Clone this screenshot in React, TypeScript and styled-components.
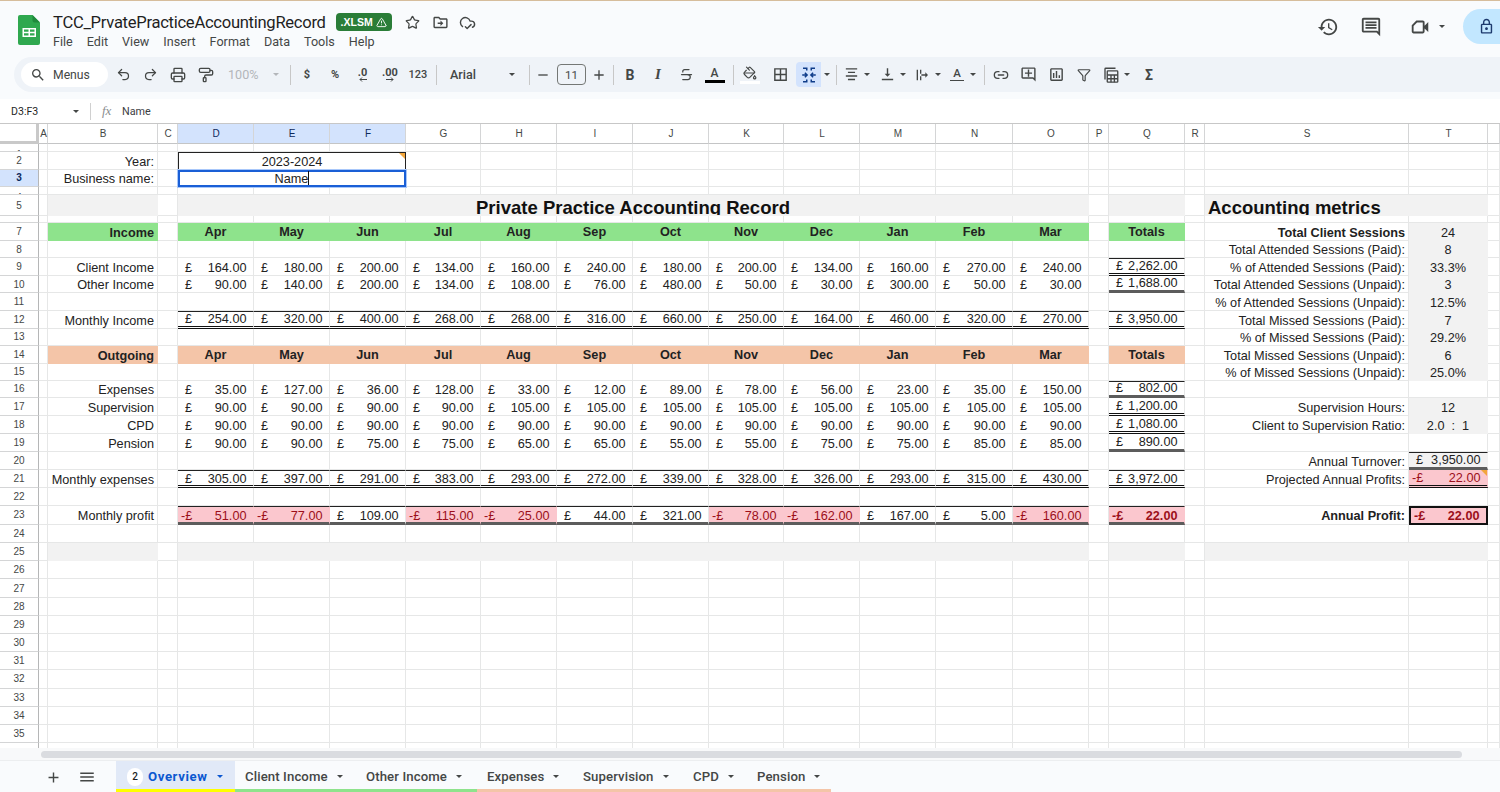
import React from "react";
import styled, { createGlobalStyle } from "styled-components";
import { Undo2, Redo2, Printer, PaintRoller, Star, CloudCheck, Strikethrough, Link2, Funnel, PaintBucket, TriangleAlert } from "lucide-react";

const GRID_FONT = `"Liberation Sans", Arial, sans-serif`;
const UI_FONT = `Roboto, "Open Sans", Arial, sans-serif`;

const COLS = ["A", "B", "C", "D", "E", "F", "G", "H", "I", "J", "K", "L", "M", "N", "O", "P", "Q", "R", "S", "T", "U"];
const COL_W = [9, 110, 20, 76, 76, 76, 75, 76, 76, 76, 75, 76, 76, 77, 76, 20, 76, 20, 204, 79, 12];
const ROW_H = [8.3, 17.4, 17.6, 8, 20.7, 7.3, 18, 17, 17.7, 17.3, 17.7, 17.7, 17, 18, 17, 17.7, 17.7, 18.3, 18, 17.7, 18.3, 17.7, 19, 17.7, 18.6, 18.2, 18.2, 18.2, 18.2, 18.2, 18.2, 18.2, 18.2, 18.2, 18.2, 8];
const TINY_ROWS = [1, 4, 6];
const LOW_MONEY_ROWS = [21, 23];
const MONTH_COLS = ["D", "E", "F", "G", "H", "I", "J", "K", "L", "M", "N", "O"];
const MONTHS = ["Apr", "May", "Jun", "Jul", "Aug", "Sep", "Oct", "Nov", "Dec", "Jan", "Feb", "Mar"];

const GREEN = "#8ee38c";
const ORANGE = "#f4c5a8";
const GRAY = "#f2f2f2";
const PINK = "#fbc7ce";

type Edge = "thin" | "double" | "thick" | "box";
type Spec = {
  text?: string;
  money?: number;
  span?: number;
  bg?: string;
  bold?: boolean;
  align?: "left" | "right" | "center";
  top?: Edge;
  bottom?: Edge;
  heading?: boolean;
  box?: boolean;
  note?: boolean;
  year?: boolean;
  selected?: boolean;
  lift?: boolean;
  skip?: boolean;
};

const fmt = (n: number) =>
  Math.abs(n).toLocaleString("en-GB", { minimumFractionDigits: 2, maximumFractionDigits: 2 });

const buildCells = () => {
  const c: Record<string, Spec> = {};
  const merge = (col: string, row: number, span: number, spec: Spec) => {
    const start = COLS.indexOf(col);
    c[col + row] = { ...spec, span };
    for (let i = 1; i < span; i++) c[COLS[start + i] + row] = { skip: true };
  };
  const label = (row: number, text: string, bold = false) => {
    c["B" + row] = { text, align: "right", bold, lift: row === 23 };
  };
  const metric = (row: number, text: string, bold = false) => {
    c["S" + row] = { text, align: "right", bold, lift: row === 23 };
  };
  const moneyRow = (row: number, values: number[], total: number, top?: Edge, bottom?: Edge, qTop?: Edge, qBottom?: Edge) => {
    MONTH_COLS.forEach((col, i) => {
      c[col + row] = { money: values[i], top, bottom, bg: row === 23 && values[i] < 0 ? PINK : undefined };
    });
    c["Q" + row] = { money: total, top: qTop, bottom: qBottom, bg: total < 0 ? PINK : undefined, bold: total < 0 };
  };
  const bandRow = (row: number, title: string, bg: string) => {
    c["B" + row] = { text: title, align: "right", bold: true, bg };
    MONTH_COLS.forEach((col, i) => {
      c[col + row] = { text: MONTHS[i], align: "center", bold: true, bg, lift: true };
    });
    c["Q" + row] = { text: "Totals", align: "center", bold: true, bg, lift: true };
  };

  label(2, "Year:");
  label(3, "Business name:");
  merge("D", 2, 3, { text: "2023-2024", align: "center", year: true, note: true });
  merge("D", 3, 3, { text: "Name", align: "center", selected: true });

  c.B5 = { bg: GRAY };
  merge("D", 5, 12, { text: "Private Practice Accounting Record", align: "center", heading: true, bg: GRAY });
  c.Q5 = { bg: GRAY };
  merge("S", 5, 2, { text: "Accounting metrics", align: "left", heading: true, bg: GRAY });

  bandRow(7, "Income", GREEN);
  bandRow(14, "Outgoing", ORANGE);

  label(9, "Client Income");
  label(10, "Other Income");
  label(12, "Monthly Income");
  label(16, "Expenses");
  label(17, "Supervision");
  label(18, "CPD");
  label(19, "Pension");
  label(21, "Monthly expenses");
  label(23, "Monthly profit");

  moneyRow(9, [164, 180, 200, 134, 160, 240, 180, 200, 134, 160, 270, 240], 2262, undefined, undefined, "thin", "double");
  moneyRow(10, [90, 140, 200, 134, 108, 76, 480, 50, 30, 300, 50, 30], 1688, undefined, undefined, undefined, "thick");
  moneyRow(12, [254, 320, 400, 268, 268, 316, 660, 250, 164, 460, 320, 270], 3950, "thin", "double", "thin", "double");
  moneyRow(16, [35, 127, 36, 128, 33, 12, 89, 78, 56, 23, 35, 150], 802, undefined, undefined, "thin", "thick");
  moneyRow(17, [90, 90, 90, 90, 105, 105, 105, 105, 105, 105, 105, 105], 1200, undefined, undefined, undefined, "double");
  moneyRow(18, [90, 90, 90, 90, 90, 90, 90, 90, 90, 90, 90, 90], 1080, undefined, undefined, undefined, "double");
  moneyRow(19, [90, 90, 75, 75, 65, 65, 55, 55, 75, 75, 85, 85], 890, undefined, undefined, undefined, "thick");
  moneyRow(21, [305, 397, 291, 383, 293, 272, 339, 328, 326, 293, 315, 430], 3972, "thin", "double", "thin", "double");
  moneyRow(23, [-51, -77, 109, -115, -25, 44, 321, -78, -162, 167, 5, -160], -22, "thin", "thick", "thin", "thick");

  metric(7, "Total Client Sessions", true);
  metric(8, "Total Attended Sessions (Paid):");
  metric(9, "% of Attended Sessions (Paid):");
  metric(10, "Total Attended Sessions (Unpaid):");
  metric(11, "% of Attended Sessions (Unpaid):");
  metric(12, "Total Missed Sessions (Paid):");
  metric(13, "% of Missed Sessions (Paid):");
  metric(14, "Total Missed Sessions (Unpaid):");
  metric(15, "% of Missed Sessions (Unpaid):");
  metric(17, "Supervision Hours:");
  metric(18, "Client to Supervision Ratio:");
  metric(20, "Annual Turnover:");
  metric(21, "Projected Annual Profits:");
  metric(23, "Annual Profit:", true);

  const stats: [number, string][] = [
    [7, "24"], [8, "8"], [9, "33.3%"], [10, "3"], [11, "12.5%"], [12, "7"], [13, "29.2%"], [14, "6"], [15, "25.0%"],
    [17, "12"], [18, "2.0  :  1"],
  ];
  stats.forEach(([row, text]) => {
    c["T" + row] = { text, align: "center", bg: GRAY };
  });
  c.T20 = { money: 3950, bg: GRAY, top: "thin", bottom: "thick" };
  c.T21 = { money: -22, bg: PINK, bottom: "double", note: true };
  c.T23 = { money: -22, bg: PINK, bold: true, box: true };

  c.B25 = { bg: GRAY };
  merge("D", 25, 12, { bg: GRAY });
  c.Q25 = { bg: GRAY };
  merge("S", 25, 2, { bg: GRAY });
  return c;
};

const CELLS = buildCells();

const edgeCss = (side: string, e?: Edge) => {
  if (e === "thin") return `border-${side}: 1px solid #222;`;
  if (e === "double") return `border-${side}: 3px double #111;`;
  if (e === "thick") return `border-${side}: 3px solid #5c5c5c;`;
  return "";
};

const GlobalStyle = createGlobalStyle`
  html, body { margin: 0; padding: 0; background: #fff; overflow: hidden; }
  #root { width: 1500px; height: 792px; }
  * { box-sizing: border-box; }
`;

const Page = styled.div`
  width: 1500px;
  height: 792px;
  display: flex;
  flex-direction: column;
  overflow: hidden;
  background: #f9fbfd;
  font-family: ${UI_FONT};
  color: #444746;
  border-top: 1px solid #d6bd9c;
`;

const Header = styled.header`
  height: 56px;
  flex: none;
  display: flex;
  align-items: flex-start;
  padding: 0 0 0 18px;
`;

const Logo = styled.svg`
  width: 22px;
  height: 30px;
  margin: 14px 13px 0 0;
  flex: none;
`;

const TitleBlock = styled.div`
  display: flex;
  flex-direction: column;
  padding-top: 11px;
`;

const TitleRow = styled.div`
  display: flex;
  align-items: center;
  height: 20px;
`;

const DocName = styled.span`
  font-size: 16.6px;
  color: #1f1f1f;
  letter-spacing: -0.29px;
`;

const Badge = styled.span`
  margin-left: 10px;
  width: 56px;
  height: 18px;
  border-radius: 4px;
  background: #2a7d38;
  color: #fff;
  font: 700 10.5px ${GRID_FONT};
  display: flex;
  align-items: center;
  justify-content: center;
  gap: 3px;
`;

const TitleIcon = styled.span<{ $ml: number }>`
  margin-left: ${(p) => p.$ml}px;
  width: 18px;
  height: 18px;
  display: flex;
  align-items: center;
  justify-content: center;
  color: #444746;
`;

const MenuBar = styled.nav`
  display: flex;
  gap: 14px;
  height: 18px;
  align-items: center;
`;

const MenuItem = styled.span`
  font-size: 12.6px;
  color: #444746;
`;

const RightIcons = styled.div`
  margin-left: auto;
  display: flex;
  align-items: center;
  height: 35px;
  margin-top: 8px;
`;

const HeadIcon = styled.span<{ $w: number }>`
  width: ${(p) => p.$w}px;
  display: flex;
  align-items: center;
  justify-content: center;
  color: #444746;
`;

const VideoIcon = styled(HeadIcon)`
  justify-content: flex-end;
  gap: 8px;
`;

const ShareButton = styled.div`
  width: 37px;
  height: 35px;
  margin-left: 18px;
  background: #c2e7ff;
  border-radius: 18px 0 0 18px;
  display: flex;
  align-items: center;
  justify-content: flex-end;
  padding-right: 5px;
  color: #1d3a6e;
`;

const Toolbar = styled.div`
  height: 35px;
  flex: none;
  margin-left: 14px;
  background: #eff3f8;
  border-radius: 18px 0 0 18px;
  display: flex;
  align-items: center;
  padding-left: 7px;
`;

const MenuSearch = styled.div`
  width: 87px;
  height: 25px;
  background: #fff;
  border-radius: 13px;
  display: flex;
  align-items: center;
  gap: 7px;
  padding-left: 9px;
  font-size: 12.2px;
  color: #444746;
  margin-right: 1px;
`;

const Tool = styled.span<{ $w: number; $ml?: number; $on?: boolean; $muted?: boolean }>`
  width: ${(p) => p.$w}px;
  height: 25px;
  margin-left: ${(p) => p.$ml ?? 0}px;
  flex: none;
  display: flex;
  align-items: center;
  justify-content: center;
  color: ${(p) => (p.$muted ? "#b3b6ba" : "#444746")};
  background: ${(p) => (p.$on ? "#d3e3fd" : "transparent")};
  border-radius: ${(p) => (p.$on ? "4px 0 0 4px" : "0")};
  font-size: 11px;
`;

const Sep = styled.span<{ $ml: number; $mr: number }>`
  width: 1px;
  height: 20px;
  flex: none;
  background: #c7c7c7;
  margin: 0 ${(p) => p.$mr}px 0 ${(p) => p.$ml}px;
`;

const Caret = styled.span`
  width: 0;
  height: 0;
  flex: none;
  border-left: 3.5px solid transparent;
  border-right: 3.5px solid transparent;
  border-top: 3.5px solid currentColor;
`;

const ToolNum = styled.span<{ $bold?: boolean }>`
  font: ${(p) => (p.$bold ? 700 : 500)} 11px ${UI_FONT};
  display: inline-flex;
  flex-direction: column;
  align-items: center;
  line-height: 9px;
`;

const MiniArrow = styled.svg`
  width: 9px;
  height: 5px;
  display: block;
`;

const ZoomTool = styled(Tool)`
  justify-content: flex-start;
  padding-left: 8px;
  gap: 15px;
  font-size: 12.6px;
`;

const FontTool = styled(Tool)`
  justify-content: space-between;
  padding: 0 9px 0 10px;
  font-size: 12.6px;
  font-weight: 500;
`;

const SizeBox = styled.span`
  width: 29px;
  height: 21px;
  margin-left: 4px;
  margin-right: 3px;
  flex: none;
  border: 1px solid #747775;
  border-radius: 4px;
  display: flex;
  align-items: center;
  justify-content: center;
  font-size: 11.5px;
  color: #444746;
`;

const LetterGlyph = styled.span<{ $italic?: boolean }>`
  font: ${(p) => (p.$italic ? "italic 700 15px" : "700 14px")} ${(p) => (p.$italic ? `"Liberation Serif", serif` : UI_FONT)};
  color: #444746;
`;

const ColorA = styled.span<{ $bar: string }>`
  display: flex;
  flex-direction: column;
  align-items: center;
  font: 500 12px/12px ${UI_FONT};
  color: #444746;
  &::after {
    content: "";
    display: block;
    width: 20px;
    height: 3px;
    margin-top: 1px;
    background: ${(p) => p.$bar};
  }
`;

const FillStack = styled.span`
  display: flex;
  flex-direction: column;
  align-items: center;
  gap: 1px;
  &::after {
    content: "";
    display: block;
    width: 20px;
    height: 3px;
    background: #fff;
  }
`;

const RotateGlyph = styled.span`
  display: flex;
  flex-direction: column;
  align-items: center;
  font: 500 11.5px/10px ${UI_FONT};
  color: #444746;
  &::after {
    content: "";
    display: block;
    width: 14px;
    height: 1.5px;
    margin-top: 2px;
    background: #444746;
  }
`;

const FormulaBar = styled.div`
  height: 25px;
  margin-top: 7px;
  flex: none;
  background: #fff;
  border-bottom: 1px solid #c7c7c7;
  display: flex;
  align-items: center;
  padding-left: 11px;
  font-size: 11px;
  color: #3c4043;
`;

const NameBox = styled.span`
  width: 62px;
  font-size: 10.6px;
  color: #1f1f1f;
`;

const NameCaret = styled.span`
  color: #444746;
  display: flex;
`;

const FormulaSep = styled.span`
  width: 1px;
  height: 17px;
  background: #d0d0d0;
  margin: 0 11px 0 11px;
`;

const Fx = styled.span`
  font: italic 13px "Liberation Serif", serif;
  color: #8a8d90;
  width: 20px;
`;

const FormulaText = styled.span`
  font-size: 10.8px;
  color: #3c4043;
`;

const Sheet = styled.div`
  flex: none;
  height: 624px;
  background: #fff;
  overflow: hidden;
  display: grid;
  grid-template-columns: 39px ${COL_W.map((w) => w + "px").join(" ")};
  grid-template-rows: 20px ${ROW_H.map((h) => h + "px").join(" ")};
  font-family: ${GRID_FONT};
`;

const Corner = styled.div`
  background: #fff;
  border-right: 3px solid #c9c9c9;
  border-bottom: 3px solid #c9c9c9;
`;

const ColHead = styled.div<{ $on: boolean }>`
  background: ${(p) => (p.$on ? "#d3e3fd" : "#fff")};
  border-right: 1px solid #d4d5d6;
  border-bottom: 1px solid #c4c5c6;
  color: ${(p) => (p.$on ? "#0d2a5c" : "#444746")};
  font-size: 10px;
  padding-left: 1px;
  display: flex;
  align-items: center;
  justify-content: center;
`;

const RowHead = styled.div<{ $on: boolean; $tiny: boolean }>`
  background: ${(p) => (p.$on ? "#d3e3fd" : "#fff")};
  border-right: 1px solid #b5b6b7;
  border-bottom: 1px solid #d4d5d6;
  color: ${(p) => (p.$on ? "#0d2a5c" : "#444746")};
  font-size: 10px;
  line-height: 11px;
  font-weight: ${(p) => (p.$on ? 700 : 400)};
  overflow: hidden;
  display: flex;
  justify-content: center;
  align-items: ${(p) => (p.$tiny ? "flex-start" : "center")};
  padding-top: ${(p) => (p.$tiny ? "5px" : "0")};
`;

const Cell = styled.div<{
  $span: number;
  $bg?: string;
  $bold?: boolean;
  $align?: string;
  $top?: Edge;
  $bottom?: Edge;
  $danger?: boolean;
  $lift?: boolean;
}>`
  grid-column: span ${(p) => p.$span};
  position: relative;
  min-width: 0;
  overflow: hidden;
  display: flex;
  align-items: flex-end;
  justify-content: ${(p) => (p.$align === "right" ? "flex-end" : p.$align === "center" ? "center" : "flex-start")};
  padding: 0 3px ${(p) => (p.$lift ? 1 : 0)}px;
  background: ${(p) => p.$bg ?? "#fff"};
  border-right: 1px solid ${(p) => p.$bg ?? "#e6e7e7"};
  border-bottom: 1px solid ${(p) => p.$bg ?? "#e6e7e7"};
  ${(p) => edgeCss("top", p.$top)}
  ${(p) => edgeCss("bottom", p.$bottom)}
  font-size: 12.7px;
  line-height: 14px;
  white-space: pre;
  font-weight: ${(p) => (p.$bold ? 700 : 400)};
  color: ${(p) => (p.$danger ? "#9c0f1a" : "#222")};
`;

const HeadingCell = styled(Cell)`
  align-items: flex-start;
  padding-top: 3px;
  font-size: 18.5px;
  line-height: 20px;
  color: #111;
`;

const YearCell = styled(Cell)`
  border-top: 1px solid #222;
  border-left: 1px solid #222;
  border-right: 1px solid #222;
  overflow: visible;
`;

const SelectedCell = styled(Cell)`
  border: 2px solid #1a5fd6;
  box-shadow: 0 0 0 1px #a8c7fa;
  z-index: 2;
  overflow: visible;
  align-items: center;
`;

const BoxCell = styled(Cell)`
  border: 2px solid #111;
  z-index: 1;
  overflow: visible;
`;

const EditCursor = styled.span`
  display: inline-block;
  width: 1px;
  height: 14px;
  background: #111;
  vertical-align: -2px;
`;

const Note = styled.span`
  position: absolute;
  top: 0;
  right: 0;
  width: 0;
  height: 0;
  border-top: 6px solid #f2a63c;
  border-left: 6px solid transparent;
`;

const Money = styled.span<{ $neg: boolean; $low: boolean }>`
  flex: 1;
  display: flex;
  justify-content: space-between;
  padding: 0 3.5px 0 ${(p) => (p.$neg ? 0 : 4)}px;
  margin-bottom: ${(p) => (p.$low ? -1 : 0)}px;
`;

const ScrollRow = styled.div`
  height: 12px;
  flex: none;
  background: #f8f9fa;
  display: flex;
  align-items: center;
  padding-left: 41px;
`;

const ScrollThumb = styled.div`
  width: 1421px;
  height: 7px;
  border-radius: 4px;
  background: #dadce0;
`;

const TabBar = styled.footer`
  flex: 1;
  min-height: 0;
  display: flex;
  background: #f9fbfd;
  border-top: 1px solid #eceef0;
`;

const TabTools = styled.div`
  width: 116px;
  display: flex;
  align-items: center;
  padding: 1px 0 0 45px;
  gap: 16px;
  color: #444746;
`;

const Tab = styled.div<{ $w: number; $strip: string; $active?: boolean }>`
  width: ${(p) => p.$w}px;
  display: flex;
  align-items: center;
  gap: 9px;
  padding: 3px 0 0 ${(p) => (p.$active ? 11 : 10)}px;
  background: ${(p) => (p.$active ? "#e1e9f7" : "transparent")};
  color: ${(p) => (p.$active ? "#0b57d0" : "#444746")};
  font-size: 13.2px;
  letter-spacing: ${(p) => (p.$active ? 0.6 : 0.1)}px;
  font-weight: ${(p) => (p.$active ? 700 : 500)};
  border-bottom: 3px solid ${(p) => p.$strip};
  white-space: nowrap;
`;

const TabCount = styled.span`
  width: 16px;
  height: 18px;
  border-radius: 9px;
  background: #fff;
  color: #1f1f1f;
  font-size: 10px;
  font-weight: 500;
  letter-spacing: 0;
  display: flex;
  align-items: center;
  justify-content: center;
  margin-right: -4px;
`;

const Mat = ({ d, size = 18, color = "currentColor" }: { d: string; size?: number; color?: string }) => (
  <svg width={size} height={size} viewBox="0 0 24 24" fill={color}>
    <path d={d} />
  </svg>
);

const P = {
  search: "M15.5 14h-.79l-.28-.27A6.47 6.47 0 0 0 16 9.5 6.5 6.5 0 1 0 9.5 16c1.61 0 3.09-.59 4.23-1.57l.27.28v.79l5 4.99L20.49 19l-4.99-5zm-6 0C7.01 14 5 11.99 5 9.5S7.01 5 9.5 5 14 7.01 14 9.5 11.99 14 9.5 14z",
  history: "M13 3c-4.97 0-9 4.03-9 9H1l3.89 3.89.07.14L9 12H6c0-3.87 3.13-7 7-7s7 3.13 7 7-3.13 7-7 7c-1.93 0-3.68-.79-4.94-2.06l-1.42 1.42C8.27 19.99 10.51 21 13 21c4.97 0 9-4.03 9-9s-4.03-9-9-9zm-1 5v5l4.28 2.54.72-1.21-3.5-2.08V8H12z",
  comment: "M21.99 4c0-1.1-.89-2-1.99-2H4c-1.1 0-2 .9-2 2v12c0 1.1.9 2 2 2h14l4 4-.01-18zM20 4v13.17L18.83 16H4V4h16zM6 12h12v2H6zm0-3h12v2H6zm0-3h12v2H6z",
  lock: "M18 8h-1V6c0-2.76-2.24-5-5-5S7 3.24 7 6v2H6c-1.1 0-2 .9-2 2v10c0 1.1.9 2 2 2h12c1.1 0 2-.9 2-2V10c0-1.1-.9-2-2-2zM9 6c0-1.66 1.34-3 3-3s3 1.34 3 3v2H9V6zm9 14H6V10h12v10zm-6-3c1.1 0 2-.9 2-2s-.9-2-2-2-2 .9-2 2 .9 2 2 2z",
  folder: "M20 6h-8l-2-2H4c-1.1 0-2 .9-2 2v12c0 1.1.9 2 2 2h16c1.1 0 2-.9 2-2V8c0-1.1-.9-2-2-2zm0 12H4V6h5.17l2 2H20v10zm-8-6H8v2h4v3l4-4-4-4v3z",
  borders: "M3 3v18h18V3H3zm8 16H5v-6h6v6zm0-8H5V5h6v6zm8 8h-6v-6h6v6zm0-8h-6V5h6v6z",
  halign: "M4 3h16v2H4zM7 8h10v2H7zM4 13h16v2H4zM7 18h10v2H7z",
  valign: "M16 11h-3V3h-2v8H8l4 4 4-4zM4 18v2h16v-2H4z",
  wrap: "M4 4h2v16H4zM9 4h2v6H9zM9 14h2v6H9zM11 11h6V8l4 4-4 4v-3h-6z",
  addComment: "M22 4c0-1.1-.9-2-2-2H4c-1.1 0-2 .9-2 2v12c0 1.1.9 2 2 2h14l4 4V4zm-2 13.17L18.83 16H4V4h16v13.17zM13 5h-2v4H7v2h4v4h2v-4h4V9h-4z",
  chart: "M19 3H5c-1.1 0-2 .9-2 2v14c0 1.1.9 2 2 2h14c1.1 0 2-.9 2-2V5c0-1.1-.9-2-2-2zm0 16H5V5h14v14zM7 10h2v7H7zm4-3h2v10h-2zm4 6h2v4h-2z",
  video: "M17 10.5V7c0-1.1-.9-2-2-2H8L3 10v7c0 1.1.9 2 2 2h10c1.1 0 2-.9 2-2v-3.5l4 4v-11l-4 4zM15 17H5v-6.2L8.8 7H15v10z",
  minus: "M5 11h14v2H5z",
  plus: "M19 13h-6v6h-2v-6H5v-2h6V5h2v6h6v2z",
  menu: "M3 18h18v-2H3v2zm0-5h18v-2H3v2zm0-7v2h18V6H3z",
};

const MergeIcon = () => (
  <svg width="18" height="18" viewBox="0 0 24 24" fill="none" stroke="#0f3d8a" strokeWidth="2">
    <path d="M4 3h5v3M20 3h-5v3M4 21h5v-3M20 21h-5v-3" />
    <path d="M3 12h6M6.5 9 9.5 12l-3 3M21 12h-6M17.5 9l-3 3 3 3" />
  </svg>
);

const TableFnIcon = () => (
  <svg width="18" height="18" viewBox="0 0 24 24" fill="none" stroke="#444746" strokeWidth="1.8">
    <path d="M4 18V4a1 1 0 0 1 1-1h13" />
    <rect x="7" y="6.5" width="14" height="15" rx="1" />
    <path d="M7 12h14M7 17h14M12 12v9.5M16.5 12v9.5" />
  </svg>
);

const SheetLogo = () => (
  <Logo viewBox="0 0 22 30">
    <path d="M2 0h12.5L22 7.5V28a2 2 0 0 1-2 2H2a2 2 0 0 1-2-2V2a2 2 0 0 1 2-2z" fill="#2fa84f" />
    <path d="M14.5 0 22 7.5h-5.5a2 2 0 0 1-2-2z" fill="#1f8a3c" />
    <path d="M4.5 13h13.5v9H4.5zM6 14.5v2.2h4.5v-2.2zM12 14.5v2.2h4.5v-2.2zM6 18.2v2.3h4.5v-2.3zM12 18.2v2.3h4.5v-2.3z" fill="#fff" fillRule="evenodd" />
  </Logo>
);

const MENUS = ["File", "Edit", "View", "Insert", "Format", "Data", "Tools", "Help"];

const TABS: { name: string; w: number; strip: string; active?: boolean; count?: string }[] = [
  { name: "Overview", w: 119, strip: "#ffff00", active: true, count: "2" },
  { name: "Client Income", w: 121, strip: GREEN },
  { name: "Other Income", w: 121, strip: GREEN },
  { name: "Expenses", w: 96, strip: ORANGE },
  { name: "Supervision", w: 110, strip: ORANGE },
  { name: "CPD", w: 64, strip: ORANGE },
  { name: "Pension", w: 84, strip: ORANGE },
];

const ToolbarRow = () => (
  <Toolbar>
    <MenuSearch>
      <Mat d={P.search} size={16} />
      Menus
    </MenuSearch>
    <Tool $w={28}><Undo2 size={15} /></Tool>
    <Tool $w={27}><Redo2 size={15} /></Tool>
    <Tool $w={28}><Printer size={16} /></Tool>
    <Tool $w={28}><PaintRoller size={16} /></Tool>
    <ZoomTool $w={66} $muted>100%<Caret /></ZoomTool>
    <Sep $ml={4} $mr={2} />
    <Tool $w={28}><ToolNum $bold>$</ToolNum></Tool>
    <Tool $w={28}><ToolNum $bold>%</ToolNum></Tool>
    <Tool $w={27}>
      <ToolNum $bold>.0
        <MiniArrow viewBox="0 0 9 5"><path d="M9 2.5H2M4 .5 2 2.5l2 2" stroke="#444746" fill="none" /></MiniArrow>
      </ToolNum>
    </Tool>
    <Tool $w={28}>
      <ToolNum $bold>.00
        <MiniArrow viewBox="0 0 9 5"><path d="M0 2.5h7M5 .5l2 2-2 2" stroke="#444746" fill="none" /></MiniArrow>
      </ToolNum>
    </Tool>
    <Tool $w={28}><ToolNum>123</ToolNum></Tool>
    <Sep $ml={4} $mr={3} />
    <FontTool $w={84}>Arial<Caret /></FontTool>
    <Sep $ml={5} $mr={3} />
    <Tool $w={20}><Mat d={P.minus} size={16} /></Tool>
    <SizeBox>11</SizeBox>
    <Tool $w={20}><Mat d={P.plus} size={16} /></Tool>
    <Sep $ml={4} $mr={2} />
    <Tool $w={28}><LetterGlyph>B</LetterGlyph></Tool>
    <Tool $w={28}><LetterGlyph $italic>I</LetterGlyph></Tool>
    <Tool $w={28}><Strikethrough size={15} /></Tool>
    <Tool $w={29}><ColorA $bar="#000">A</ColorA></Tool>
    <Sep $ml={4} $mr={2} />
    <Tool $w={28}><FillStack><PaintBucket size={14} /></FillStack></Tool>
    <Tool $w={28} $ml={2}><Mat d={P.borders} size={17} /></Tool>
    <Tool $w={25} $ml={2} $on><MergeIcon /></Tool>
    <Tool $w={12}><Caret /></Tool>
    <Sep $ml={3} $mr={3} />
    <Tool $w={22}><Mat d={P.halign} size={17} /></Tool>
    <Tool $w={10}><Caret /></Tool>
    <Tool $w={22} $ml={4}><Mat d={P.valign} size={17} /></Tool>
    <Tool $w={10}><Caret /></Tool>
    <Tool $w={20} $ml={4}><Mat d={P.wrap} size={16} /></Tool>
    <Tool $w={11}><Caret /></Tool>
    <Tool $w={20} $ml={4}><RotateGlyph>A</RotateGlyph></Tool>
    <Tool $w={11}><Caret /></Tool>
    <Sep $ml={6} $mr={2} />
    <Tool $w={28}><Link2 size={16} /></Tool>
    <Tool $w={27}><Mat d={P.addComment} size={17} /></Tool>
    <Tool $w={28}><Mat d={P.chart} size={17} /></Tool>
    <Tool $w={28}><Funnel size={14} /></Tool>
    <Tool $w={22} $ml={2}><TableFnIcon /></Tool>
    <Tool $w={9}><Caret /></Tool>
    <Tool $w={28} $ml={4}><LetterGlyph>Σ</LetterGlyph></Tool>
  </Toolbar>
);

const MoneyText = ({ value, low }: { value: number; low: boolean }) => (
  <Money $neg={value < 0} $low={low}>
    <span>{value < 0 ? "-£" : "£"}</span>
    <span>{fmt(value)}</span>
  </Money>
);

const renderCell = (col: string, row: number) => {
  const key = col + row;
  const s = CELLS[key] ?? {};
  if (s.skip) return null;
  const shared = {
    $span: s.span ?? 1,
    $bg: s.bg,
    $bold: s.bold,
    $align: s.align,
    $top: s.top,
    $bottom: s.bottom,
    $danger: s.money !== undefined && s.money < 0,
    $lift: s.lift,
  };
  const note = s.note ? <Note /> : null;
  const low = LOW_MONEY_ROWS.includes(row) && col !== "T";
  const body = s.money !== undefined ? <MoneyText value={s.money} low={low} /> : s.text;
  if (s.heading) return <HeadingCell key={key} {...shared} $bold>{s.text}</HeadingCell>;
  if (s.year) return <YearCell key={key} {...shared}>{body}{note}</YearCell>;
  if (s.selected) return <SelectedCell key={key} {...shared}><span>{s.text}<EditCursor /></span></SelectedCell>;
  if (s.box) return <BoxCell key={key} {...shared}>{body}</BoxCell>;
  return <Cell key={key} {...shared}>{body}{note}</Cell>;
};

export default function App() {
  return (
    <Page>
      <GlobalStyle />
      <Header>
        <SheetLogo />
        <TitleBlock>
          <TitleRow>
            <DocName>TCC_PrvatePracticeAccountingRecord</DocName>
            <Badge>.XLSM <TriangleAlert size={11} /></Badge>
            <TitleIcon $ml={12}><Star size={15} /></TitleIcon>
            <TitleIcon $ml={10}><Mat d={P.folder} size={17} /></TitleIcon>
            <TitleIcon $ml={9}><CloudCheck size={17} /></TitleIcon>
          </TitleRow>
          <MenuBar>
            {MENUS.map((m) => <MenuItem key={m}>{m}</MenuItem>)}
          </MenuBar>
        </TitleBlock>
        <RightIcons>
          <HeadIcon $w={42}><Mat d={P.history} size={22} /></HeadIcon>
          <HeadIcon $w={44}><Mat d={P.comment} size={22} /></HeadIcon>
          <VideoIcon $w={52}><Mat d={P.video} size={22} /><Caret /></VideoIcon>
          <ShareButton><Mat d={P.lock} size={17} /></ShareButton>
        </RightIcons>
      </Header>
      <ToolbarRow />
      <FormulaBar>
        <NameBox>D3:F3</NameBox>
        <NameCaret><Caret /></NameCaret>
        <FormulaSep />
        <Fx>fx</Fx>
        <FormulaText>Name</FormulaText>
      </FormulaBar>
      <Sheet>
        <Corner />
        {COLS.map((c) => (
          <ColHead key={c} $on={c === "D" || c === "E" || c === "F"}>{c === "U" ? "" : c}</ColHead>
        ))}
        {ROW_H.map((_, i) => {
          const row = i + 1;
          return (
            <React.Fragment key={row}>
              <RowHead $on={row === 3} $tiny={TINY_ROWS.includes(row)}>{row <= 35 ? row : ""}</RowHead>
              {COLS.map((col) => renderCell(col, row))}
            </React.Fragment>
          );
        })}
      </Sheet>
      <ScrollRow><ScrollThumb /></ScrollRow>
      <TabBar>
        <TabTools>
          <Mat d={P.plus} size={17} />
          <Mat d={P.menu} size={18} />
        </TabTools>
        {TABS.map((t) => (
          <Tab key={t.name} $w={t.w} $strip={t.strip} $active={t.active}>
            {t.count ? <TabCount>{t.count}</TabCount> : null}
            {t.name}
            <Caret />
          </Tab>
        ))}
      </TabBar>
    </Page>
  );
}
